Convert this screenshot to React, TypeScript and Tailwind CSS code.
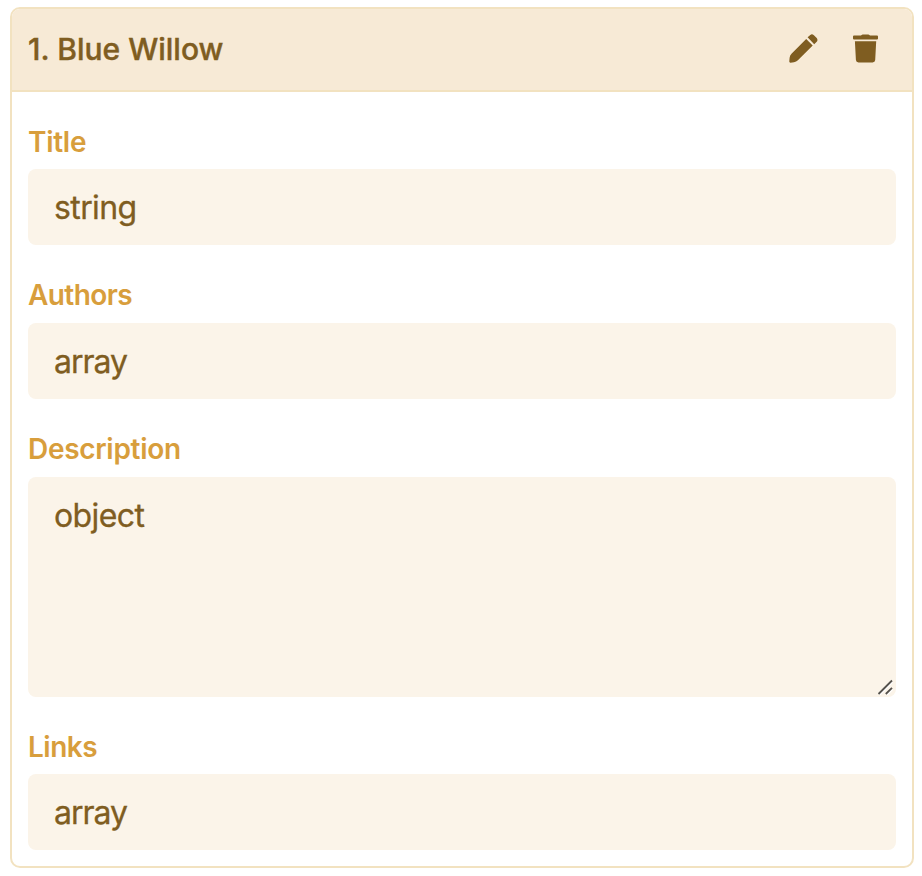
import React from "react";

function Field({ label, value, labelClass, className }: { label: string; value: string; labelClass: string; className: string }) {
  return (
    <div>
      <div className={"h-[42px] text-[28px] leading-[42px] font-semibold text-[#d89e3c] " + labelClass}>{label}</div>
      <div className={"rounded-[8px] bg-[#fbf4e9] px-[26px] pt-[15px] text-[32px] leading-[48px] font-normal text-[#7f5d21] [-webkit-text-stroke:0.3px_#7f5d21] " + className}>{value}</div>
    </div>
  );
}

export default function App() {
  return (
    <div className="h-[876px] w-[922px] bg-white pt-[7px] pl-[10px] font-['Inter',sans-serif]">
      <div className="h-[861px] w-[904px] overflow-hidden rounded-[10px] border-2 border-[#f2e2c0]">
        <div className="flex h-[83px] items-center border-b-2 border-[#f2e2c0] bg-[#f7ead6] pl-4 pr-[34px] text-[#7f5d21]">
          <span className="flex-1 text-[30px] font-medium [-webkit-text-stroke:0.4px_#7f5d21]">1. Blue Willow</span>
          <svg className="mr-[35px] mb-[3px] h-[29px] w-[29px]" viewBox="0 0 29 29" fill="currentColor">
            <path d="M18.600 3.300 21.300.9Q23.100-.4 24.900 1.300L27.700 4.100Q29.200 5.900 27.700 7.700L25.200 10.300ZM17.200 5 23.700 11.600 8.900 26.300Q7.200 28 5 28.300L1.500 28.700Q.1 28.800.3 27.200L.6 23.800Q.9 21.400 2.500 19.700Z" />
          </svg>
          <svg className="mb-[3px] h-[29px] w-[25px]" viewBox="0 0 25 29" fill="currentColor">
            <path d="M1 1.600H8L8.600.9Q9 .5 9.600.5H15.400Q16 .5 16.400.9L17 1.600H24Q25 1.600 25 2.600V4.600Q25 5.500 24 5.500H1Q0 5.500 0 4.600V2.600Q0 1.600 1 1.600ZM1.900 7.300H23.200L22.200 26.100Q22 28.500 19.600 28.500H5.500Q3.100 28.500 2.900 26.100Z" />
          </svg>
        </div>
        <div className="px-4 pt-[29px]">
          <Field label="Title" value="string" labelClass="mb-[6px] tracking-[-0.3px]" className="mb-[29px] h-[76px] tracking-[-0.6px]" />
          <Field label="Authors" value="array" labelClass="mb-[7px] tracking-[-0.6px]" className="mb-[29px] h-[76px] tracking-[-1px]" />
          <div className="relative">
            <Field label="Description" value="object" labelClass="mb-[7px] tracking-[-0.3px]" className="mb-[29px] h-[220px] tracking-[-0.6px]" />
            <svg className="absolute right-[3px] bottom-[2px] h-4 w-4" viewBox="0 0 16 16" fill="none">
              <path d="M2.500 16 15.500 3M10 16l5.500-5.500" stroke="#fff" strokeWidth="1.5" />
              <path d="M1.500 15 15 1.500M8.800 15l6.200-6.200" stroke="#55524d" strokeWidth="1.800" />
            </svg>
          </div>
          <Field label="Links" value="array" labelClass="mb-[6px] tracking-[-0.5px]" className="h-[76px] tracking-[-1px]" />
        </div>
      </div>
    </div>
  );
}
